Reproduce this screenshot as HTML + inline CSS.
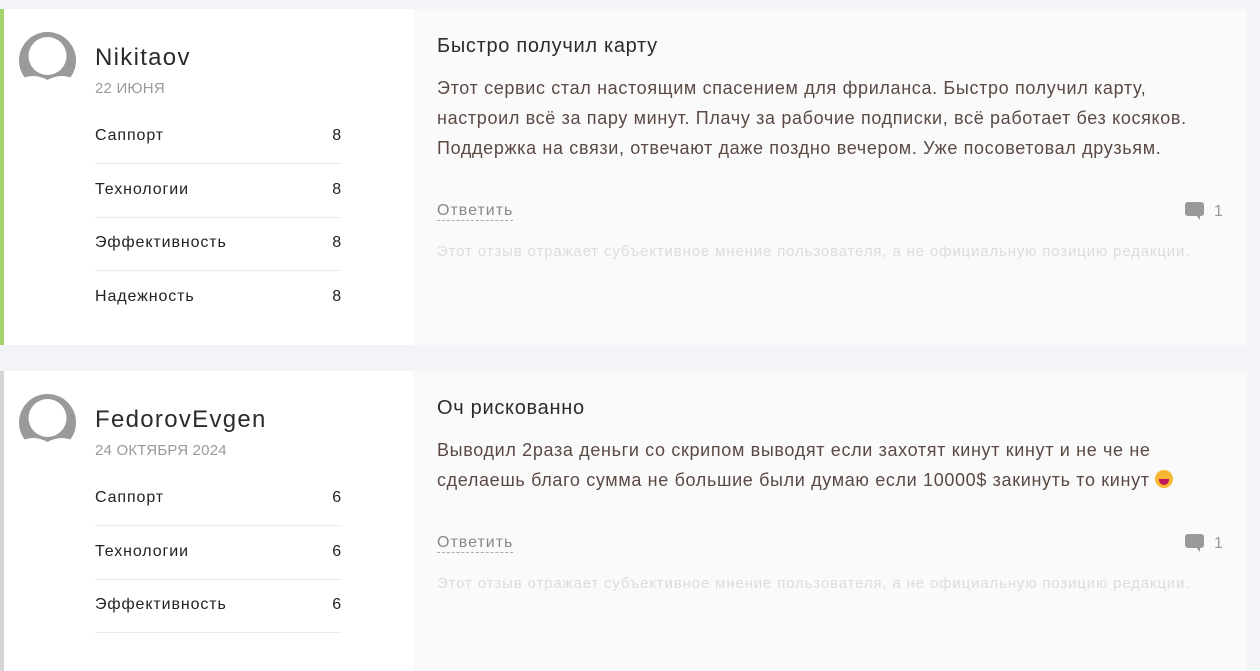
<!DOCTYPE html>
<html><head><meta charset="utf-8"><style>
*{margin:0;padding:0;box-sizing:border-box}
body{width:1260px;height:651px;overflow:hidden;background:#f3f4f8;font-family:"Liberation Sans","DejaVu Sans",sans-serif;position:relative}
.card{position:absolute;left:0;width:1247px;background:#fafafa;border-left:4px solid #a3d36b}
.left{position:absolute;left:0;top:0;width:409px;height:100%;background:#fff}
.av{position:absolute;left:15px;top:23px;width:57px;height:57px}
.name{position:absolute;left:91px;top:35px;font-size:24px;color:#2b2b2b;letter-spacing:1.3px}
.date{position:absolute;left:91px;top:71px;font-size:15px;color:#9a9a9a;letter-spacing:0.2px}
.row{position:absolute;left:91px;width:247px;height:37px;border-bottom:1px solid #ececec;font-size:16px;color:#222;letter-spacing:0.9px}
.row span{position:absolute;top:0}
.row b{position:absolute;right:0;top:0;font-weight:normal}
.title{position:absolute;left:433px;top:26px;font-size:20px;color:#2b2b2b;letter-spacing:0.7px}
.body{position:absolute;left:433px;top:64px;font-size:18px;line-height:30px;color:#5b4a44;white-space:nowrap;letter-spacing:0.65px}
.reply{position:absolute;left:433px;font-size:16px;color:#888;border-bottom:1px dashed #aaa;line-height:18px;letter-spacing:1px}
.cm{position:absolute;left:1181px;font-size:16px;color:#999}
.disc{position:absolute;left:433px;font-size:15px;color:#dcdcdc;letter-spacing:0.85px}
</style></head><body>
<div class="card" style="top:9px;height:336px">
 <div class="left"></div>
 <svg class="av" viewBox="0 0 57 57"><circle cx="28.5" cy="28.5" r="28.5" fill="#9a9a9a"/><circle cx="28.5" cy="24" r="19" fill="#fff"/><path d="M0 48 Q14 40 28.5 48 Q43 40 57 48 L57 57 L0 57Z" fill="#fff"/></svg>
 <div class="name">Nikitaov</div>
 <div class="date">22 ИЮНЯ</div>
 <div class="row" style="top:118px"><span>Саппорт</span><b>8</b></div>
 <div class="row" style="top:172px"><span>Технологии</span><b>8</b></div>
 <div class="row" style="top:225px"><span>Эффективность</span><b>8</b></div>
 <div class="row" style="top:279px;border:none"><span>Надежность</span><b>8</b></div>
 <div class="title">Быстро получил карту</div>
 <div class="body">Этот сервис стал настоящим спасением для фриланса. Быстро получил карту,<br>настроил всё за пару минут. Плачу за рабочие подписки, всё работает без косяков.<br>Поддержка на связи, отвечают даже поздно вечером. Уже посоветовал друзьям.</div>
 <div class="reply" style="top:193px">Ответить</div>
 <div class="cm" style="top:193px"><svg width="19" height="18" viewBox="0 0 19 18" style="vertical-align:-4px;margin-right:10px"><rect x="0" y="0" width="19" height="14" rx="3" fill="#999"/><path d="M11 13 L15 18 L15 13Z" fill="#999"/></svg>1</div>
 <div class="disc" style="top:234px">Этот отзыв отражает субъективное мнение пользователя, а не официальную позицию редакции.</div>
</div>
<div class="card" style="top:371px;height:300px;border-left-color:#d5d5d5">
 <div class="left"></div>
 <svg class="av" viewBox="0 0 57 57"><circle cx="28.5" cy="28.5" r="28.5" fill="#9a9a9a"/><circle cx="28.5" cy="24" r="19" fill="#fff"/><path d="M0 48 Q14 40 28.5 48 Q43 40 57 48 L57 57 L0 57Z" fill="#fff"/></svg>
 <div class="name">FedorovEvgen</div>
 <div class="date">24 ОКТЯБРЯ 2024</div>
 <div class="row" style="top:118px"><span>Саппорт</span><b>6</b></div>
 <div class="row" style="top:172px"><span>Технологии</span><b>6</b></div>
 <div class="row" style="top:225px"><span>Эффективность</span><b>6</b></div>
 <div class="title">Оч рискованно</div>
 <div class="body">Выводил 2раза деньги со скрипом выводят если захотят кинут кинут и не че не<br>сделаешь благо сумма не большие были думаю если 10000$ закинуть то кинут <span style="display:inline-block;width:18px;height:18px;border-radius:50%;background:#f7b733;vertical-align:-2px;position:relative"><span style="position:absolute;left:4px;top:9px;width:10px;height:6px;background:#c2185b;border-radius:0 0 6px 6px"></span></span></div>
 <div class="reply" style="top:163px">Ответить</div>
 <div class="cm" style="top:163px"><svg width="19" height="18" viewBox="0 0 19 18" style="vertical-align:-4px;margin-right:10px"><rect x="0" y="0" width="19" height="14" rx="3" fill="#999"/><path d="M11 13 L15 18 L15 13Z" fill="#999"/></svg>1</div>
 <div class="disc" style="top:204px">Этот отзыв отражает субъективное мнение пользователя, а не официальную позицию редакции.</div>
</div>
</body></html>
